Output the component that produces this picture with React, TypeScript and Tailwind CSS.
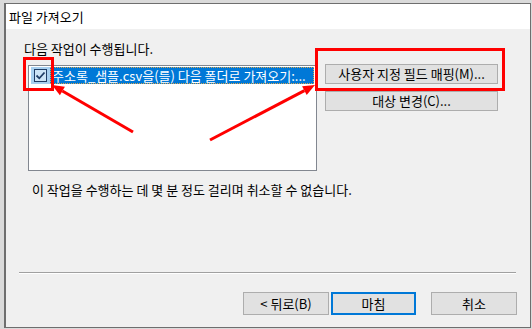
import React from "react";

const font = "font-[family-name:'Noto_Sans_CJK_KR','Noto_Sans',sans-serif]";

function WinButton({
  label,
  className,
  primary,
}: {
  label: string;
  className: string;
  primary?: boolean;
}) {
  return (
    <div
      className={
        "flex items-center justify-center bg-[#e1e1e1] text-[13px] leading-[16px] text-black " +
        (primary ? "border-2 border-[#0078d7] " : "border border-[#adadad] ") +
        className
      }
    >
      {label}
    </div>
  );
}

function Arrows() {
  return (
    <svg className="absolute left-0 top-0" width="532" height="329" viewBox="0 0 532 329">
      <line x1="133" y1="132" x2="62.4" y2="91" stroke="#ff0000" strokeWidth="3" />
      <polygon points="52,85 64.9,86.7 59.9,95.3" fill="#ff0000" />
      <line x1="210" y1="140" x2="304.4" y2="90.6" stroke="#ff0000" strokeWidth="3" />
      <polygon points="315,85 306.7,95 302.1,86.2" fill="#ff0000" />
    </svg>
  );
}

export default function App() {
  return (
    <div className={"relative w-[532px] h-[329px] overflow-hidden bg-[#dadada] pl-[4px] pt-[3px] " + font}>
      <div className="w-[527px] h-[325px] border border-[#6e6e6e] border-l-2 bg-[#f0f0f0] flex flex-col">
        {/* title bar */}
        <div className="h-[25px] bg-white flex items-center pl-[3px] text-[13px] text-black">
          파일 가져오기
        </div>

        {/* client area */}
        <div className="flex-1 flex flex-col px-[13px] pt-[11px]">
          <div className="pl-[5px] flex flex-col">
            <div className="text-[13px] leading-[17px] text-black">다음 작업이 수행됩니다.</div>

            <div className="flex items-start mt-[7px] ml-[4px]">
              <div className="mt-[1px] w-[289px] h-[106px] border border-[#828790] bg-white pt-[1px] pl-[2px] pr-[2px]">
                <div className="flex items-center h-[17px]">
                  <div className="w-[19px] h-[17px] bg-[#a8d0f0] flex items-center justify-center">
                    <div className="w-[13px] h-[13px] border border-[#1f3d66] bg-[#cce4f7] flex items-center justify-center">
                      <svg width="11" height="11" viewBox="0 0 11 11">
                        <path d="M1.5 5.5 L4.3 8.3 L9.5 2.5" stroke="#1f3d66" strokeWidth="1.8" fill="none" />
                      </svg>
                    </div>
                  </div>
                  <div className="flex-1 h-[17px] bg-[#0078d7] border border-dotted border-[#d9a650] text-white text-[13px] leading-[15px] pl-[1px] whitespace-nowrap overflow-hidden">
                    주소록_샘플.csv을(를) 다음 폴더로 가져오기:...
                  </div>
                </div>
              </div>

              <div className="ml-[8px] flex flex-col gap-[7px]">
                <WinButton label="사용자 지정 필드 매핑(M)..." className="w-[173px] h-[20px]" />
                <WinButton label="대상 변경(C)..." className="w-[173px] h-[20px]" />
              </div>
            </div>

            <div className="mt-[10px] ml-[8px] text-[13px] leading-[17px] text-black">
              이 작업을 수행하는 데 몇 분 정도 걸리며 취소할 수 없습니다.
            </div>
          </div>

          <div className="mt-[74px] h-[2px] border-t border-[#a0a0a0] border-b border-b-white mr-[1px]" />

          <div className="mt-[18px] flex justify-end">
            <WinButton label="< 뒤로(B)" className="w-[86px] h-[23px]" />
            <WinButton label="마침" className="w-[85px] h-[23px] ml-[2px]" primary />
            <WinButton label="취소" className="w-[86px] h-[23px] ml-[15px]" />
          </div>
        </div>
      </div>

      {/* annotations */}
      <div className="absolute left-[23px] top-[57px] w-[31px] h-[34px] border-[3px] border-[#ff0000]" />
      <div className="absolute left-[315px] top-[48px] w-[190px] h-[43px] border-[3px] border-[#ff0000]" />
      <Arrows />
    </div>
  );
}
